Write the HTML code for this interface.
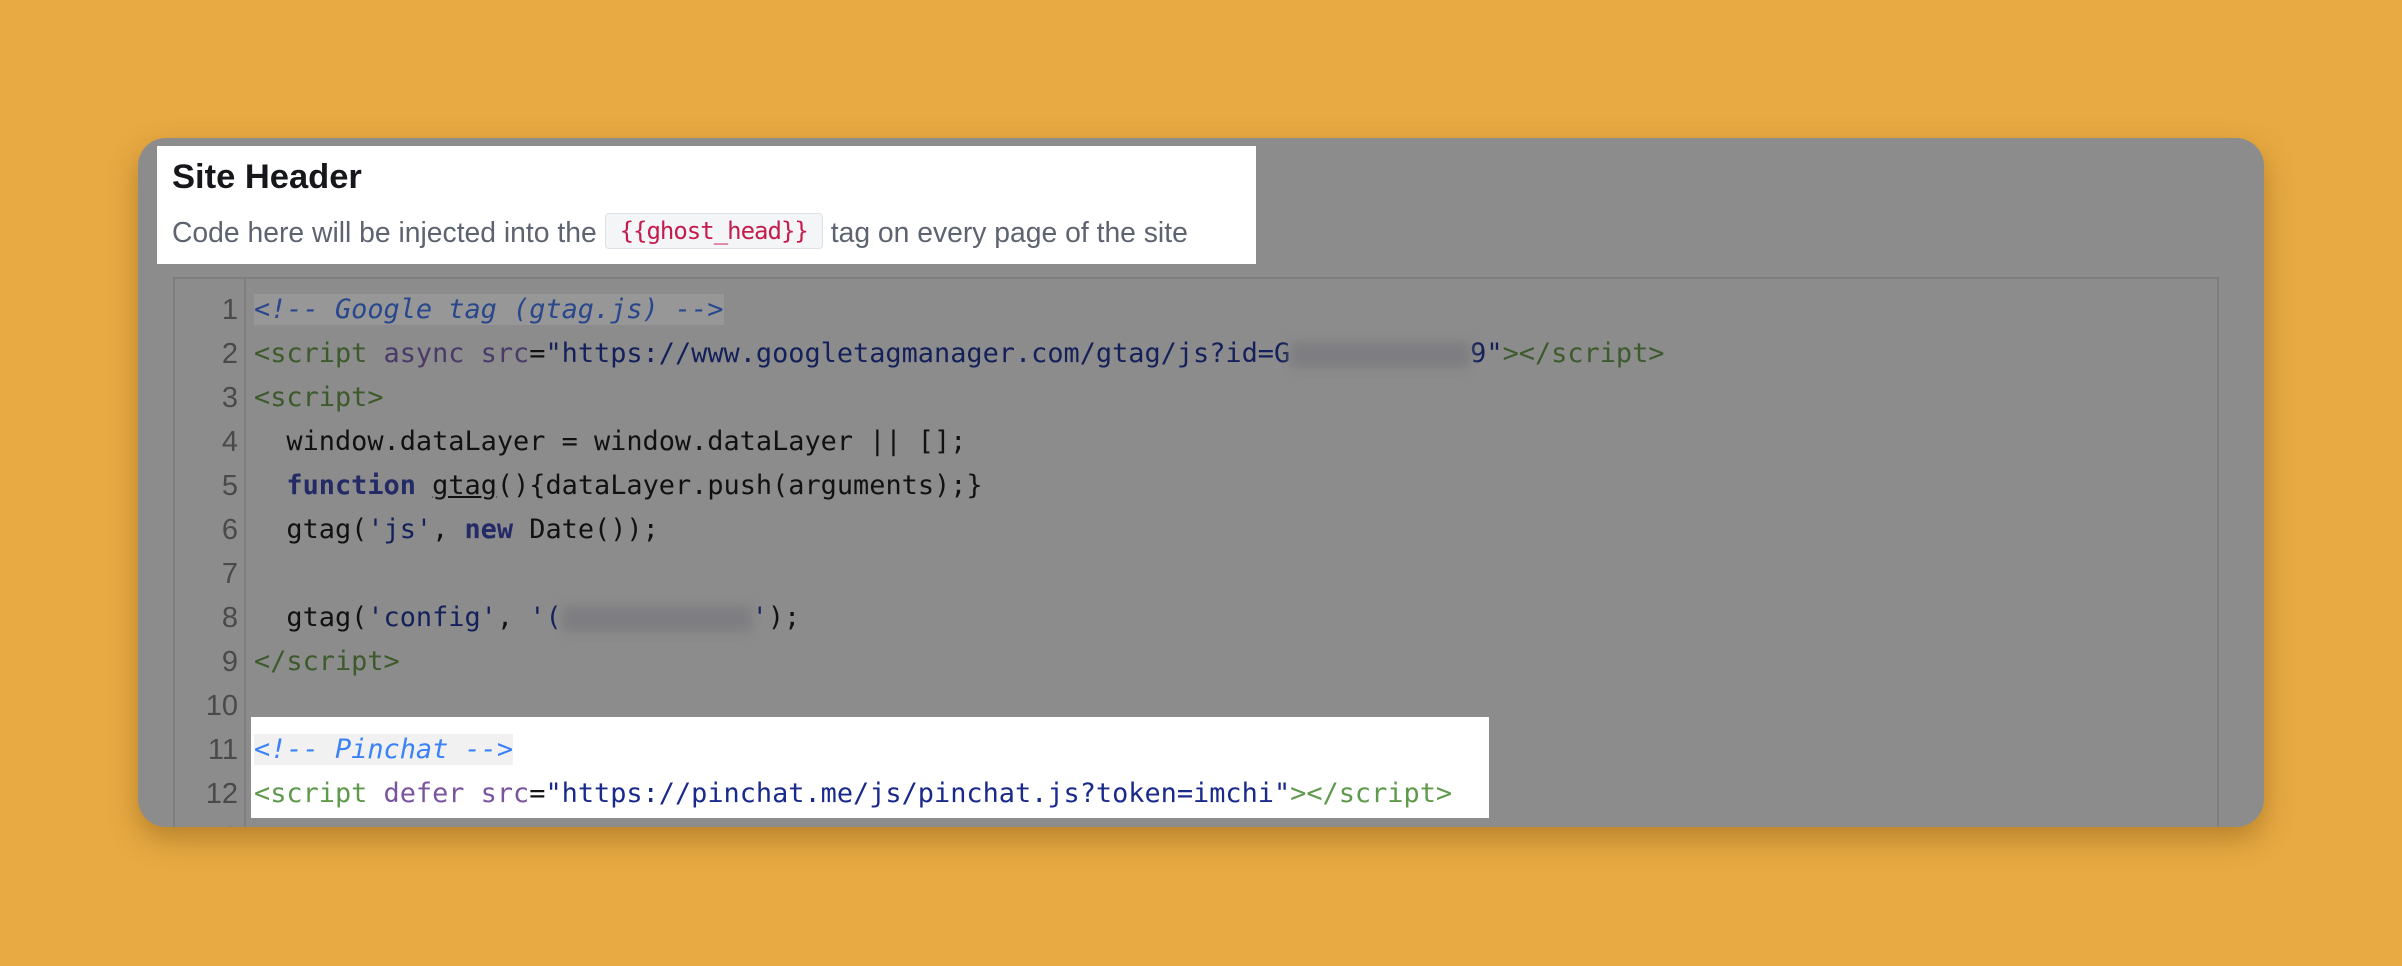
<!DOCTYPE html>
<html><head><meta charset="utf-8"><style>
*{margin:0;padding:0;box-sizing:border-box}
html,body{width:2402px;height:966px;overflow:hidden;background:#E8AA42}
.card{position:absolute;left:138px;top:138px;width:2126px;height:689px;background:#8c8c8c;border-radius:28px;box-shadow:0 12px 30px rgba(90,55,0,.35)}
.clip{position:absolute;left:0;top:0;width:2402px;height:966px;clip-path:inset(138px 138px 139px 138px round 28px)}
.hdr{position:absolute;left:157px;top:146px;width:1099px;height:118px;background:#fff}
.t{position:absolute;left:172px;top:158px;font:700 34.5px "Liberation Sans",sans-serif;color:#15171a}
.s{position:absolute;left:172px;top:212px;font:28.3px "Liberation Sans",sans-serif;color:#5d6470;white-space:nowrap;line-height:40px}
.chip{display:inline-block;vertical-align:top;margin:1px 8px 0 8px;width:218px;height:36px;border:1px solid #dde1e5;background:#f4f5f6;border-radius:4px;font:24px "DejaVu Sans Mono","Liberation Mono",monospace;color:#c41c4c;text-align:center;line-height:34px;letter-spacing:-1px}
.ed{position:absolute;left:173px;top:277px;width:2046px;height:600px;border:2px solid #7e7e7e}
.gut{position:absolute;left:244px;top:277px;width:2px;height:600px;background:#7e7e7e}
.ln{position:absolute;left:170px;width:68px;text-align:right;font:29px "Liberation Sans",sans-serif;color:#4a4a4a;line-height:44px;height:44px}
.cd{position:absolute;left:254px;font:26.9px "DejaVu Sans Mono","Liberation Mono",monospace;line-height:44px;height:44px;white-space:pre;color:#111}
.wb{position:absolute;left:251px;top:717px;width:1238px;height:101px;background:#fff}
.cm{font-style:italic;color:#28478c;background:#979797}
.tg{color:#3d5a2c}.at{color:#4a3a68}.st{color:#14205a}.kw{color:#232a66;font-weight:bold}
.w .cm{color:#3b82f6;background:#f1f1f1}.w .tg{color:#5f9a4c}.w .at{color:#7a559e}.w .st{color:#1a2a8c}
.blur{display:inline-block;height:26px;background:#7e7e82;filter:blur(5px);vertical-align:middle}
</style></head><body>
<div class="card"></div>
<div class="clip">
<div class="hdr"></div>
<div class="t">Site Header</div>
<div class="s">Code here will be injected into the<span class="chip">{{ghost_head}}</span>tag on every page of the site</div>
<div class="ed"></div>
<div class="gut"></div>
<div class="wb"></div>
<div class="ln" style="top:288px">1</div>
<div class="ln" style="top:332px">2</div>
<div class="ln" style="top:376px">3</div>
<div class="ln" style="top:420px">4</div>
<div class="ln" style="top:464px">5</div>
<div class="ln" style="top:508px">6</div>
<div class="ln" style="top:552px">7</div>
<div class="ln" style="top:596px">8</div>
<div class="ln" style="top:640px">9</div>
<div class="ln" style="top:684px">10</div>
<div class="ln" style="top:728px">11</div>
<div class="ln" style="top:772px">12</div>
<div class="ln" style="top:816px">13</div>
<div class="cd" style="top:288px"><span class="cm">&lt;!-- Google tag (gtag.js) --&gt;</span></div>
<div class="cd" style="top:332px"><span class="tg">&lt;script</span> <span class="at">async src</span>=<span class="st">"https://www.googletagmanager.com/gtag/js?id=G<span class="blur" style="width:180px"></span>9"</span><span class="tg">&gt;&lt;/script&gt;</span></div>
<div class="cd" style="top:376px"><span class="tg">&lt;script&gt;</span></div>
<div class="cd" style="top:420px">  window.dataLayer = window.dataLayer || [];</div>
<div class="cd" style="top:464px">  <span class="kw">function</span> <u>gtag</u>(){dataLayer.push(arguments);}</div>
<div class="cd" style="top:508px">  gtag(<span class="st">'js'</span>, <span class="kw">new</span> Date());</div>
<div class="cd" style="top:596px">  gtag(<span class="st">'config'</span>, <span class="st">'(<span class="blur" style="width:190px"></span>'</span>);</div>
<div class="cd" style="top:640px"><span class="tg">&lt;/script&gt;</span></div>
<div class="cd w" style="top:728px"><span class="cm">&lt;!-- Pinchat --&gt;</span></div>
<div class="cd w" style="top:772px"><span class="tg">&lt;script</span> <span class="at">defer src</span>=<span class="st">"https://pinchat.me/js/pinchat.js?token=imchi"</span><span class="tg">&gt;&lt;/script&gt;</span></div>
</div>
</body></html>
